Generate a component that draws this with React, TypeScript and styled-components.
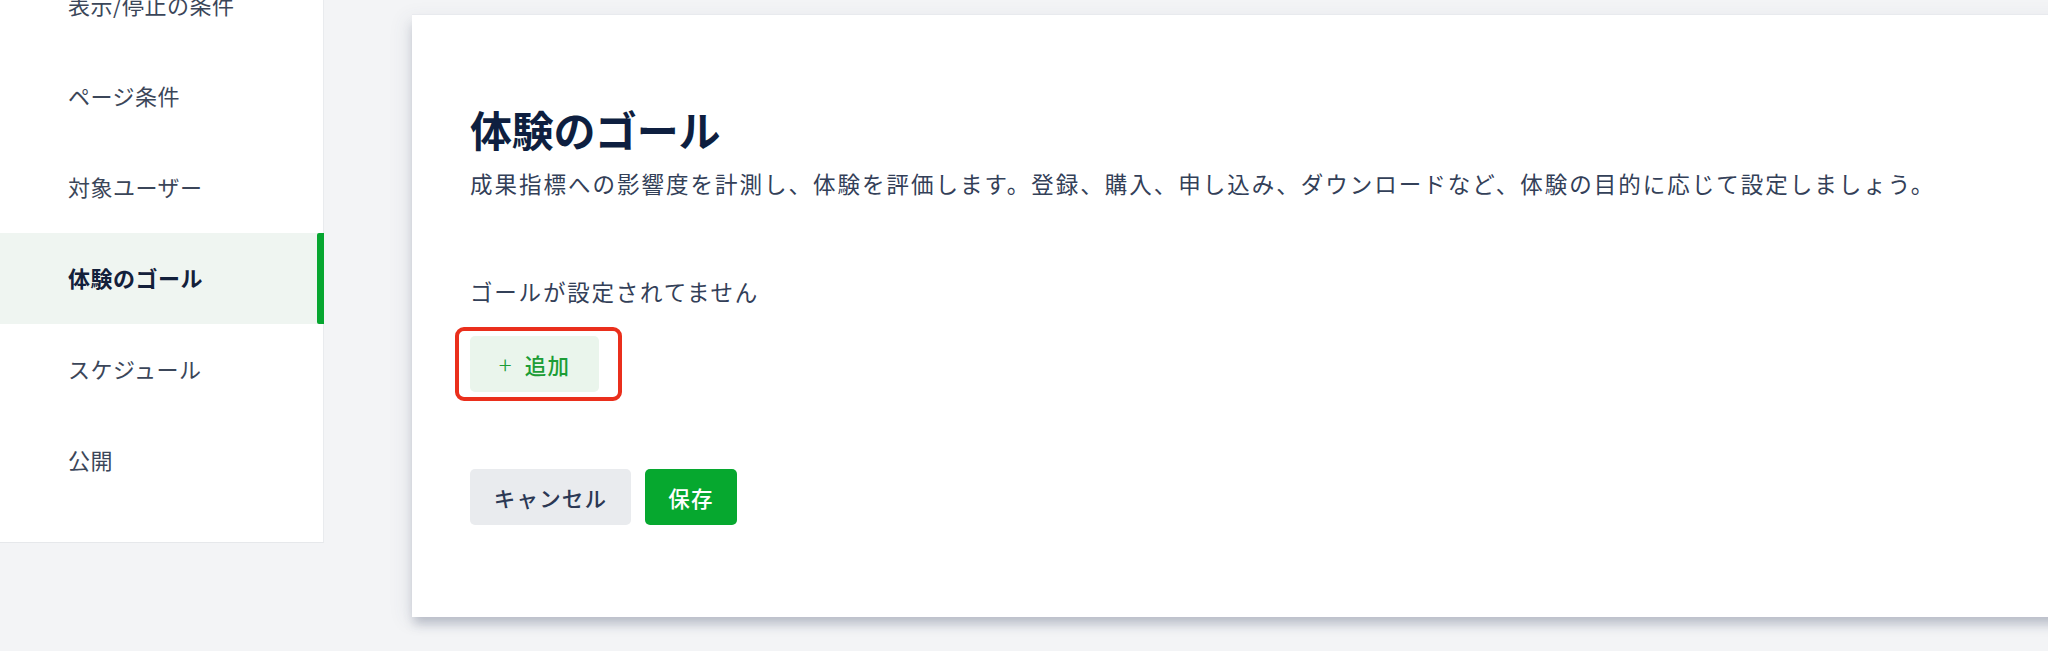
import React from "react";
import styled, { createGlobalStyle } from "styled-components";

const GlobalStyle = createGlobalStyle`
  html, body {
    margin: 0;
    padding: 0;
    background: #f3f4f6;
    font-family: "Noto Sans CJK JP", "Noto Sans", sans-serif;
  }
  * { box-sizing: border-box; }
`;

const Page = styled.div`
  width: 2048px;
  height: 651px;
  overflow: hidden;
  background: #f3f4f6;
`;

const Layout = styled.div`
  display: flex;
  align-items: flex-start;
  gap: 88px;
`;

const Sidebar = styled.nav`
  flex: 0 0 324px;
  margin-top: -40px;
  padding-bottom: 36px;
  background: #ffffff;
  border-right: 1px solid #e9ebee;
  border-bottom: 1px solid #e6e8eb;
  display: flex;
  flex-direction: column;
`;

const NavItem = styled.div<{ $active?: boolean }>`
  position: relative;
  height: 91px;
  display: flex;
  align-items: center;
  padding: 0 0 3px 68px;
  font-size: 22px;
  letter-spacing: 0.5px;
  color: ${(p) => (p.$active ? "#13203b" : "#3b4659")};
  font-weight: ${(p) => (p.$active ? 700 : 400)};
  background: ${(p) => (p.$active ? "#eff5f1" : "transparent")};
`;

const ActiveBar = styled.span`
  position: absolute;
  right: -1px;
  top: 0;
  bottom: 0;
  width: 7px;
  background: #06a630;
  border-radius: 2px 0 0 2px;
`;

const Card = styled.section`
  flex: 1;
  margin-top: 14px;
  margin-right: -40px;
  height: 603px;
  background: #ffffff;
  border-top: 1px solid #e8eaee;
  box-shadow: 0 9px 10px -2px rgba(60, 72, 100, 0.28),
    -6px 4px 18px rgba(60, 72, 100, 0.08);
  padding: 86px 0 0 58px;
  display: flex;
  flex-direction: column;
  align-items: flex-start;
`;

const Title = styled.h1`
  margin: 0;
  font-size: 42px;
  line-height: 56px;
  font-weight: 700;
  color: #0e1f40;
  letter-spacing: -0.3px;
`;

const Description = styled.p`
  margin: 10px 0 0;
  font-size: 22.5px;
  line-height: 32px;
  letter-spacing: 2px;
  color: #334058;
`;

const EmptyText = styled.p`
  margin: 76px 0 0;
  font-size: 22.5px;
  line-height: 32px;
  letter-spacing: 1.8px;
  color: #334058;
`;

const Highlight = styled.div`
  margin-top: 20px;
  margin-left: -15px;
  display: inline-flex;
  padding: 5px 19px 5px 11px;
  border: 4px solid #ea2f1c;
  border-radius: 9px;
`;

const Button = styled.button<{ $variant: "add" | "cancel" | "save" }>`
  height: 56px;
  border: none;
  border-radius: 5px;
  display: inline-flex;
  align-items: center;
  justify-content: center;
  gap: 12px;
  font-family: "Noto Sans CJK JP", "Noto Sans", sans-serif;
  font-size: 21.5px;
  letter-spacing: 1.2px;
  font-weight: 500;
  cursor: pointer;
  padding: 0;
  width: ${(p) => (p.$variant === "add" ? "129px" : p.$variant === "cancel" ? "161px" : "92px")};
  background: ${(p) =>
    p.$variant === "add" ? "#eaf5ec" : p.$variant === "cancel" ? "#e9ebee" : "#06a82f"};
  color: ${(p) =>
    p.$variant === "add" ? "#1c9d36" : p.$variant === "cancel" ? "#2b3854" : "#ffffff"};
`;

const Plus = styled.span`
  font-size: 24px;
  font-weight: 300;
  line-height: 1;
`;

const Actions = styled.div`
  margin-top: 68px;
  display: flex;
  gap: 14px;
`;

const items = ["表示/停止の条件", "ページ条件", "対象ユーザー", "体験のゴール", "スケジュール", "公開"];

export default function App() {
  return (
    <Page>
      <GlobalStyle />
      <Layout>
        <Sidebar>
          {items.map((label) => (
            <NavItem key={label} $active={label === "体験のゴール"}>
              {label}
              {label === "体験のゴール" && <ActiveBar />}
            </NavItem>
          ))}
        </Sidebar>
        <Card>
          <Title>体験のゴール</Title>
          <Description>
            成果指標への影響度を計測し、体験を評価します。登録、購入、申し込み、ダウンロードなど、体験の目的に応じて設定しましょう。
          </Description>
          <EmptyText>ゴールが設定されてません</EmptyText>
          <Highlight>
            <Button $variant="add">
              <Plus>+</Plus>
              <span>追加</span>
            </Button>
          </Highlight>
          <Actions>
            <Button $variant="cancel">キャンセル</Button>
            <Button $variant="save">保存</Button>
          </Actions>
        </Card>
      </Layout>
    </Page>
  );
}
